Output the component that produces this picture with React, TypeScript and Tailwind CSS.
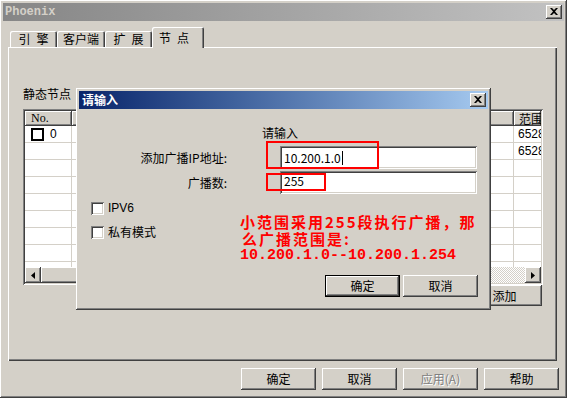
import clsx from 'clsx';

const raised =
  'shadow-[inset_-1px_-1px_#404040,inset_1px_1px_#ffffff,inset_-2px_-2px_#808080,inset_2px_2px_#d4d0c8]';
const sunken =
  'shadow-[inset_1px_1px_#808080,inset_-1px_-1px_#ffffff,inset_2px_2px_#404040,inset_-2px_-2px_#d4d0c8]';
const checker =
  'bg-[image:repeating-conic-gradient(#ffffff_0%_25%,#d4d0c8_0%_50%)] bg-[length:2px_2px]';

function CloseBtn() {
  return (
    <div className={clsx('flex h-[14px] w-[16px] items-center justify-center bg-[#d4d0c8]', raised)}>
      <svg width="8" height="7" viewBox="0 0 8 7" className="-mt-px">
        <path d="M0 0h2l2 2l2-2h2l-3 3.5l3 3.5h-2l-2-2l-2 2h-2l3-3.5z" fill="#000" />
      </svg>
    </div>
  );
}

function WinButton({ label, isDefault, disabled }: { label: string; isDefault?: boolean; disabled?: boolean }) {
  return (
    <div
      className={clsx(
        'flex h-[22px] w-[75px] items-center justify-center bg-[#d4d0c8] text-[12px] leading-[14px]',
        isDefault && 'border border-black',
        raised,
        disabled ? 'text-[#808080] [text-shadow:1px_1px_#ffffff]' : 'text-black'
      )}
    >
      {label}
    </div>
  );
}

function Arrow({ dir }: { dir: 'left' | 'right' }) {
  return (
    <div className={clsx('flex h-[16px] w-[16px] items-center justify-center bg-[#d4d0c8]', raised)}>
      <svg width="4" height="7" viewBox="0 0 4 7">
        <path d={dir === 'left' ? 'M4 0v7L0 3.5z' : 'M0 0v7l4-3.5z'} fill="#000" />
      </svg>
    </div>
  );
}

function Check({ bold }: { bold?: boolean }) {
  if (bold) return <div className="h-[13px] w-[13px] border-2 border-black bg-white" />;
  return <div className={clsx('h-[13px] w-[13px] bg-white', sunken)} />;
}

const rows = [
  { no: '0', range: '6528' },
  { no: '', range: '6528' },
  { no: '', range: '' },
  { no: '', range: '' },
  { no: '', range: '' },
  { no: '', range: '' },
  { no: '', range: '' },
  { no: '', range: '' },
  { no: '', range: '' },
];

const tabs = ['引\u2002擎', '客户端', '扩\u2002展'];

export default function App() {
  return (
    <div
      className={clsx(
        "relative h-[398px] w-[567px] overflow-hidden bg-[#d4d0c8] p-[3px] font-['Noto_Sans_CJK_SC','Noto_Sans',sans-serif] text-[12px] text-black",
        raised
      )}
    >
      {/* title bar */}
      <div className="flex h-[18px] items-center justify-between bg-gradient-to-r from-[#868686] to-[#c2c2c2] pl-[2px] pr-[2px]">
        <span className="font-['Liberation_Mono',monospace] text-[12px] font-bold leading-[14px] text-[#d4d0c8]">
          Phoenix
        </span>
        <CloseBtn />
      </div>

      {/* tabs */}
      <div className="mt-[6px] flex h-[20px] items-end pl-[7px]">
        {tabs.map((t, i) => (
          <div
            key={t}
            className={clsx(
              'flex h-[16px] items-start justify-center rounded-t-[2px] pt-[1px] leading-[14px] whitespace-pre',
              i === 1 ? 'w-[48px]' : 'w-[47px]',
              'shadow-[inset_1px_1px_#ffffff,inset_-1px_0_#404040,inset_-2px_0_#808080]'
            )}
          >
            {t}
          </div>
        ))}
        <div className="relative z-10 -mb-px flex h-[21px] w-[52px] items-start rounded-t-[2px] bg-[#d4d0c8] pl-[7px] pt-[4px] leading-[14px] whitespace-pre shadow-[inset_1px_1px_#ffffff,inset_-1px_0_#404040,inset_-2px_0_#808080]">
          {'节\u2002点'}
        </div>
      </div>

      {/* tab panel */}
      <div
        className={clsx(
          'relative ml-[5px] flex h-[314px] w-[549px] flex-col pl-[15px] pt-[40px]',
          'shadow-[inset_1px_1px_#ffffff,inset_-1px_-1px_#404040,inset_-2px_-2px_#808080]'
        )}
      >
        <div className="h-[14px] leading-[14px]">静态节点</div>
        <div className={clsx('mt-[8px] flex h-[176px] w-[520px] flex-col bg-white p-[2px]', sunken)}>
          <div className="flex h-[15px] shrink-0">
            <div className={clsx("w-[47px] bg-[#d4d0c8] pl-[6px] font-['Liberation_Serif',serif] leading-[15px]", raised)}>
              No.
            </div>
            <div className={clsx('flex-1 bg-[#d4d0c8]', raised)} />
            <div className={clsx('w-[27px] overflow-hidden bg-[#d4d0c8] pl-[5px] leading-[15px] whitespace-nowrap', raised)}>
              范围
            </div>
          </div>
          <div className="flex-1 overflow-hidden">
            {rows.map((r, i) => (
              <div key={i} className="flex h-[17px] border-b border-[#d4d0c8]">
                <div className="flex w-[47px] items-center border-r border-[#d4d0c8] pl-[6px]">
                  {r.no && (
                    <>
                      <Check bold />
                      <span className="ml-[6px] font-['Liberation_Sans',sans-serif] leading-[14px]">{r.no}</span>
                    </>
                  )}
                </div>
                <div className="flex-1 border-r border-[#d4d0c8]" />
                <div className="w-[27px] overflow-hidden pl-[4px] font-['Liberation_Sans',sans-serif] leading-[16px] whitespace-nowrap">
                  {r.range}
                </div>
              </div>
            ))}
          </div>
          <div className="flex h-[16px] shrink-0">
            <Arrow dir="left" />
            <div className={clsx('w-[160px] bg-[#d4d0c8]', raised)} />
            <div className={clsx('flex-1', checker)} />
            <Arrow dir="right" />
          </div>
        </div>
        <div className="mr-[15px] self-end">
          <div className={clsx('flex h-[21px] w-[75px] items-center justify-center bg-[#d4d0c8] leading-[14px]', raised)}>
            添加
          </div>
        </div>
      </div>

      {/* bottom buttons */}
      <div className="mt-[7px] flex justify-end gap-[6px] pr-[5px]">
        <WinButton label="确定" />
        <WinButton label="取消" />
        <WinButton label="应用(A)" disabled />
        <WinButton label="帮助" />
      </div>

      {/* input dialog */}
      <div className={clsx('absolute left-[76px] top-[88px] flex h-[222px] w-[415px] flex-col bg-[#d4d0c8] p-[3px]', raised)}>
        <div className="flex h-[18px] shrink-0 items-center justify-between bg-gradient-to-r from-[#0a246a] to-[#a6caf0] pl-[3px] pr-[2px]">
          <span className="font-bold leading-[14px] text-white">请输入</span>
          <CloseBtn />
        </div>
        <div className="flex flex-col pt-[17px]">
          <div className="pl-[183px] leading-[14px]">请输入</div>
          <div className="mt-[6px] flex h-[23px] items-center">
            <div className="w-[148px] text-right leading-[14px]">添加广播IP地址:</div>
            <div className={clsx('ml-[53px] flex h-[23px] w-[197px] items-center bg-white pl-[4px] leading-[14px]', sunken)}>
              10.200.1.0<span className="ml-px h-[14px] w-px bg-black" />
            </div>
          </div>
          <div className="mt-[2px] flex h-[23px] items-center">
            <div className="w-[148px] text-right leading-[14px]">广播数:</div>
            <div className={clsx('ml-[53px] flex h-[23px] w-[197px] items-start bg-white pl-[4px] pt-[3px] leading-[14px]', sunken)}>
              255
            </div>
          </div>
          <div className="mt-[7px] flex items-center gap-[4px] pl-[12px]">
            <Check />
            <span className="font-['Liberation_Sans',sans-serif] leading-[14px]">IPV6</span>
          </div>
          <div className="mt-[10px] flex items-center gap-[4px] pl-[12px]">
            <Check />
            <span className="leading-[14px]">私有模式</span>
          </div>
          <div className="mt-[36px] flex justify-end gap-[3px] pr-[10px]">
            <WinButton label="确定" isDefault />
            <WinButton label="取消" />
          </div>
        </div>

        {/* annotations */}
        <div className="absolute left-[190px] top-[53px] h-[28px] w-[113px] border-2 border-[#ff0000]" />
        <div className="absolute left-[190px] top-[85px] h-[18px] w-[60px] border-2 border-[#ff0000]" />
        <div className="absolute left-[164px] top-[125px] text-[15px] font-bold leading-[17px] text-[#ff0000]">
          <div className="whitespace-nowrap tracking-[2px]">小范围采用255段执行广播，那</div>
          <div className="whitespace-nowrap pl-[2px] tracking-[2px]">么广播范围是:</div>
          <div className="whitespace-nowrap font-['Liberation_Mono',monospace] text-[15px]">10.200.1.0--10.200.1.254</div>
        </div>
      </div>
    </div>
  );
}
